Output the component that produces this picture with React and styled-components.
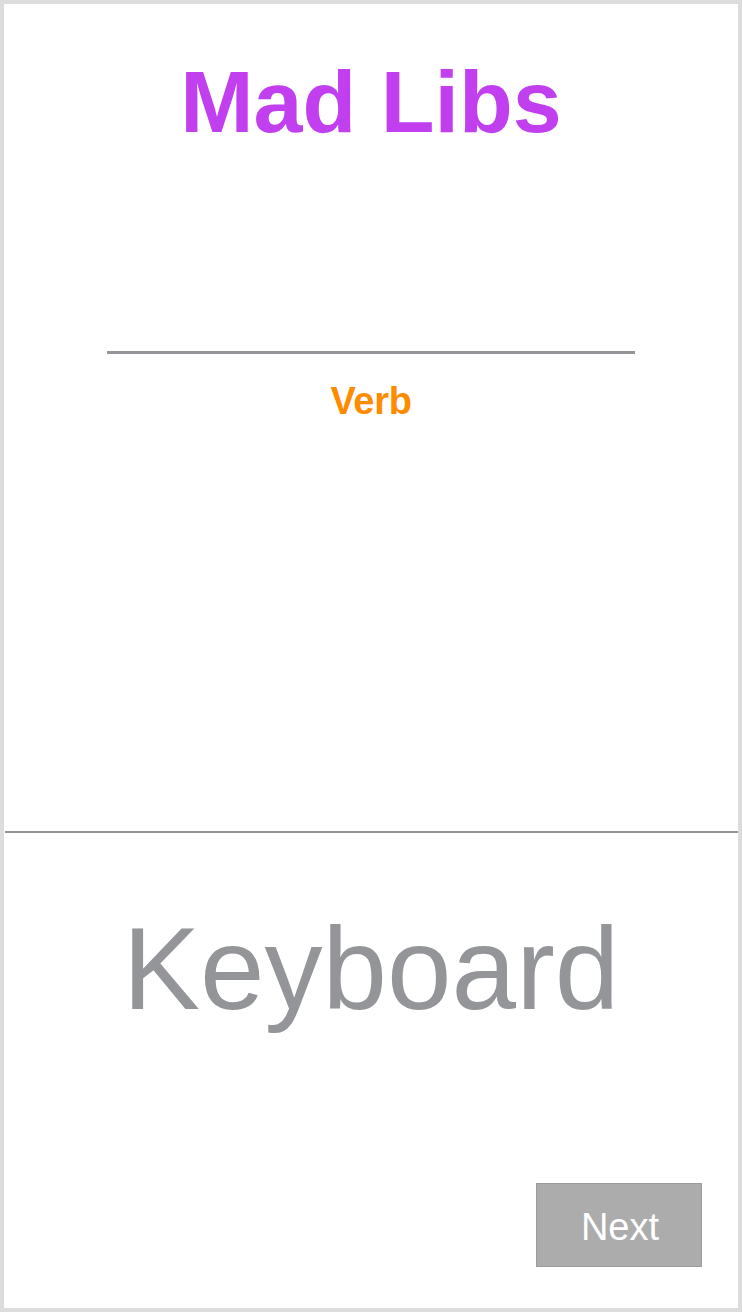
import React from "react";
import styled, { createGlobalStyle } from "styled-components";

const Global = createGlobalStyle`
  html, body { margin: 0; padding: 0; background: #fff; }
  * { box-sizing: border-box; }
`;

const Frame = styled.div`
  width: 742px;
  height: 1312px;
  border: 4px solid #dcdcdc;
  background: #fff;
  display: flex;
  flex-direction: column;
  font-family: "Liberation Sans", Arial, Helvetica, sans-serif;
`;

const TopSection = styled.section`
  height: 827px;
  display: flex;
  flex-direction: column;
  align-items: center;
  padding-top: 54px;
`;

const Title = styled.h1`
  margin: 0;
  font-size: 88px;
  line-height: 88px;
  font-weight: 700;
  color: #c13fee;
`;

const BlankLine = styled.div`
  width: 528px;
  height: 3px;
  background: #939598;
  margin-top: 205px;
`;

const Hint = styled.div`
  margin-top: 28px;
  font-size: 38px;
  line-height: 38px;
  font-weight: 700;
  color: #ff8c00;
  letter-spacing: -0.3px;
`;

const Divider = styled.hr`
  margin: 0 0 0 1px;
  border: none;
  height: 2px;
  background: #939598;
`;

const BottomSection = styled.section`
  flex: 1;
  display: flex;
  flex-direction: column;
  align-items: center;
  padding: 78px 36px 41px 0;
`;

const KeyboardLabel = styled.div`
  font-size: 116px;
  line-height: 116px;
  color: #939598;
  margin-left: 36px;
`;

const NextButton = styled.button`
  margin-top: auto;
  align-self: flex-end;
  width: 166px;
  height: 84px;
  background: #acacac;
  border: 1px solid #999b9d;
  color: #fff;
  font-family: inherit;
  font-size: 38px;
  padding: 4px 0 0 2px;
  cursor: pointer;
`;

export default function App() {
  return (
    <>
      <Global />
      <Frame>
        <TopSection>
          <Title>Mad Libs</Title>
          <BlankLine />
          <Hint>Verb</Hint>
        </TopSection>
        <Divider />
        <BottomSection>
          <KeyboardLabel>Keyboard</KeyboardLabel>
          <NextButton>Next</NextButton>
        </BottomSection>
      </Frame>
    </>
  );
}
